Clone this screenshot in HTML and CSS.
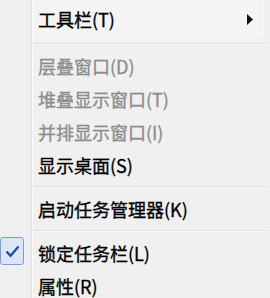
FILE: index.html
```html
<!DOCTYPE html>
<html lang="zh-CN">
<head>
    <meta charset="UTF-8">
    <meta name="viewport" content="width=device-width, initial-scale=1.0">
    <title>任务栏菜单</title>
    <link rel="stylesheet" href="styles.css">
</head>
<body>
    <div class="menu">
        <div class="menu-item top hover">
            <div class="gutter"></div>
            <div class="label">工具栏(T)</div>
            <svg class="arrow" width="6" height="11" viewBox="0 0 6 11"><path d="M0 0 L6 5.5 L0 11 Z" fill="#111"/></svg>
        </div>
        <div class="separator"></div>
        <div class="menu-item disabled">
            <div class="gutter"></div>
            <div class="label">层叠窗口(D)</div>
        </div>
        <div class="menu-item disabled">
            <div class="gutter"></div>
            <div class="label">堆叠显示窗口(T)</div>
        </div>
        <div class="menu-item disabled">
            <div class="gutter"></div>
            <div class="label">并排显示窗口(I)</div>
        </div>
        <div class="menu-item">
            <div class="gutter"></div>
            <div class="label">显示桌面(S)</div>
        </div>
        <div class="separator"></div>
        <div class="menu-item">
            <div class="gutter"></div>
            <div class="label">启动任务管理器(K)</div>
        </div>
        <div class="separator"></div>
        <div class="menu-item">
            <div class="gutter">
                <div class="check">
                    <svg width="15" height="13" viewBox="0 0 15 13"><path d="M1.5 6.5 L5.5 10.8 L13.5 1.5" fill="none" stroke="#2347a3" stroke-width="2.2"/></svg>
                </div>
            </div>
            <div class="label">锁定任务栏(L)</div>
        </div>
        <div class="menu-item">
            <div class="gutter"></div>
            <div class="label">属性(R)</div>
        </div>
    </div>
</body>
</html>
```

FILE: styles.css
```css
body {
    margin: 0;
    background-color: #f0f0f0;
    font-family: "Noto Sans CJK SC", "Liberation Sans", sans-serif;
    overflow: hidden;
}
.menu {
    width: 270px;
    height: 298px;
    background: linear-gradient(to right, transparent 31px, #e2e3e3 31px, #e2e3e3 32px, #fcfcfc 32px, #fcfcfc 33px, transparent 33px);
}
.menu-item {
    display: flex;
    align-items: center;
    height: 33px;
    font-size: 18px;
    color: #000;
}
.menu-item.top {
    height: 38px;
    position: relative;
}
.menu-item.hover::before {
    content: "";
    position: absolute;
    left: 33px;
    right: 6px;
    top: 0;
    bottom: 0;
    background: #f4f4f4;
    border: 1px solid #f7f7f7;
    border-top: none;
}
.menu-item.disabled {
    color: #8c8c8c;
}
.gutter {
    width: 32px;
    height: 100%;
    flex: none;
    display: flex;
    align-items: center;
}
.label {
    flex: 1;
    padding-left: 6px;
    position: relative;
    -webkit-text-stroke: 0.3px currentColor;
}
.arrow {
    margin-right: 17px;
    position: relative;
}
.check {
    flex: none;
    width: 24px;
    height: 28px;
    margin-top: -3px;
    box-sizing: border-box;
    border: 1px solid #7b9bd2;
    border-radius: 3px;
    background: #dde6f6;
    display: flex;
    align-items: center;
    justify-content: center;
}
.check svg {
    display: block;
}
.separator {
    margin: 5px 3px 4px 32px;
    border-top: 1px solid #dcdcdc;
    border-bottom: 1px solid #fbfbfb;
}
```
